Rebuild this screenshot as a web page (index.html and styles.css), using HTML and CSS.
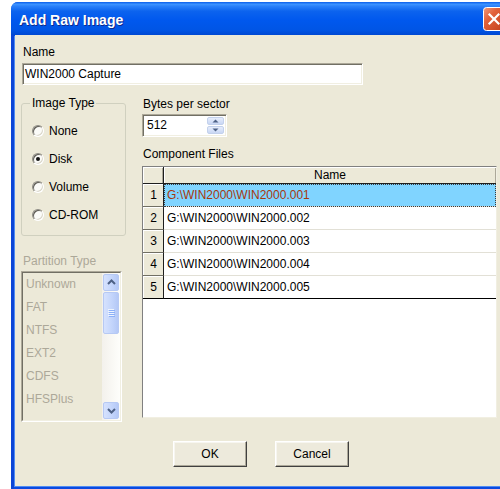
FILE: index.html
```html
<!DOCTYPE html>
<html>
<head>
<meta charset="utf-8">
<title>Add Raw Image</title>
<link rel="stylesheet" href="styles.css">
</head>
<body>
<div class="window">
  <div class="titlebar">
    <span class="title">Add Raw Image</span>
    <span class="close">
      <svg width="22" height="24" viewBox="0 0 22 24">
        <defs>
          <linearGradient id="cg" x1="0" y1="0" x2="1" y2="1">
            <stop offset="0" stop-color="#F09A7C"/>
            <stop offset="0.35" stop-color="#E2623B"/>
            <stop offset="1" stop-color="#C2401C"/>
          </linearGradient>
        </defs>
        <rect x="0.5" y="0.5" width="21" height="23" rx="3" fill="url(#cg)" stroke="#fff"/>
        <path d="M6.5 7.5 L15.5 16.5 M15.5 7.5 L6.5 16.5" stroke="#fff" stroke-width="2.2" stroke-linecap="square"/>
      </svg>
    </span>
  </div>
  <div class="frame">
    <div class="client">
      <div class="lbl">Name</div>
      <div class="edit">WIN2000 Capture</div>

      <div class="main">
        <div class="left">
          <fieldset class="group">
            <legend>Image Type</legend>
            <div class="radio"><span class="rb"></span>None</div>
            <div class="radio"><span class="rb on"></span>Disk</div>
            <div class="radio"><span class="rb"></span>Volume</div>
            <div class="radio"><span class="rb"></span>CD-ROM</div>
          </fieldset>

          <div class="lbl disabled part-lbl">Partition Type</div>
          <div class="listbox">
            <div class="listbox-in">
              <ul class="items">
                <li>Unknown</li>
                <li>FAT</li>
                <li>NTFS</li>
                <li>EXT2</li>
                <li>CDFS</li>
                <li>HFSPlus</li>
              </ul>
              <div class="vscroll">
                <span class="sbtn">
                  <svg width="15" height="15" viewBox="0 0 15 15"><path d="M4 9 L7.5 5.5 L11 9" fill="none" stroke="#4D6185" stroke-width="2"/></svg>
                </span>
                <span class="thumb">
                  <svg width="7" height="8" viewBox="0 0 7 8"><path d="M0 0.5h6M0 2.5h6M0 4.5h6M0 6.5h6" stroke="#EEF4FE" stroke-width="1"/><path d="M1 1.5h6M1 3.5h6M1 5.5h6M1 7.5h6" stroke="#8CB0F8" stroke-width="1"/></svg>
                </span>
                <span class="track"></span>
                <span class="sbtn">
                  <svg width="15" height="15" viewBox="0 0 15 15"><path d="M4 6 L7.5 9.5 L11 6" fill="none" stroke="#4D6185" stroke-width="2"/></svg>
                </span>
              </div>
            </div>
          </div>
        </div>

        <div class="right">
          <div class="lbl">Bytes per sector</div>
          <div class="spin">
            <span class="spin-val">512</span>
            <span class="spin-btns">
              <span class="spb"><svg width="7" height="4" viewBox="0 0 7 4"><path d="M0.5 3.5 L3.5 0.5 L6.5 3.5 Z" fill="#4D6185"/></svg></span>
              <span class="spb"><svg width="7" height="4" viewBox="0 0 7 4"><path d="M0.5 0.5 L3.5 3.5 L6.5 0.5 Z" fill="#4D6185"/></svg></span>
            </span>
          </div>

          <div class="lbl files-lbl">Component Files</div>
          <div class="grid">
            <div class="hcell corner"></div>
            <div class="hcell">Name</div>

            <div class="rh">1</div>
            <div class="cell sel">G:\WIN2000\WIN2000.001</div>
            <div class="rh">2</div>
            <div class="cell">G:\WIN2000\WIN2000.002</div>
            <div class="rh">3</div>
            <div class="cell">G:\WIN2000\WIN2000.003</div>
            <div class="rh">4</div>
            <div class="cell">G:\WIN2000\WIN2000.004</div>
            <div class="rh last">5</div>
            <div class="cell last">G:\WIN2000\WIN2000.005</div>
          </div>
        </div>
      </div>

      <div class="buttons">
        <button class="btn">OK</button>
        <button class="btn">Cancel</button>
      </div>
    </div>
  </div>
</div>
</body>
</html>
```

FILE: styles.css
```css
* { box-sizing: border-box; }

html, body { margin: 0; padding: 0; }

body {
  width: 500px;
  height: 489px;
  overflow: hidden;
  background: #fff;
  font-family: "Liberation Sans", Arial, sans-serif;
  font-size: 12px;
  color: #000;
}

/* window chrome */
.window {
  margin: 2px 0 0 11px;
  width: 500px;
  height: 487px;
  display: flex;
  flex-direction: column;
  background: #0A4AD8;
  border-radius: 7px 7px 0 0;
  overflow: hidden;
}

.titlebar {
  height: 33px;
  flex: none;
  display: flex;
  align-items: flex-start;
  padding-left: 8px;
  background: linear-gradient(#0A5EEB 0%, #3D93FF 7%, #2A80FA 13%, #0C63EE 28%, #0058EE 55%, #0055E5 85%, #0048D2 100%);
}

.title {
  margin-top: 10px;
  font-weight: bold;
  font-size: 14px;
  line-height: 16px;
  color: #fff;
  text-shadow: 1px 1px 0 #0D2A8E;
  white-space: nowrap;
}

.close {
  margin: 5px 6px 0 auto;
  width: 22px;
  height: 24px;
  display: block;
}
.close svg { display: block; }

.frame {
  flex: 1;
  display: flex;
  padding: 0 0 3px 4px;
  background: linear-gradient(to right, #0B45D6 0 3px, #0B4AE0 3px);
}

.client {
  flex: 1;
  background: #ECE9D8;
  box-shadow: -1px 1px 0 #4F8CF2;
  padding: 10px 0 0 6px;
  display: flex;
  flex-direction: column;
}

/* labels */
.lbl {
  line-height: 14px;
  padding-left: 2px;
  white-space: nowrap;
}
.disabled { color: #ACA899; }

/* sunken single-line edit */
.edit {
  margin: 4px 0 0 1px;
  width: 341px;
  height: 22px;
  background: #fff;
  border: 1px solid;
  border-color: #ACA899 #fff #fff #ACA899;
  box-shadow: inset 1px 1px 0 #716F64, inset -1px -1px 0 #F1EFE2;
  padding-left: 2px;
  line-height: 20px;
  white-space: nowrap;
}

.main {
  display: flex;
  gap: 16px;
  margin-top: 11px;
}

.left {
  width: 105px;
  flex: none;
  display: flex;
  flex-direction: column;
}

/* group box */
.group {
  margin: 0;
  min-width: 0;
  padding: 7px 0 6px 8px;
  border: 1px solid #D0D0BF;
  border-radius: 3px;
}
.group legend {
  padding: 0 2px;
  line-height: 14px;
}

.radio {
  height: 28px;
  display: flex;
  align-items: center;
  gap: 5px;
  margin-left: 2px;
}
.rb {
  width: 12px;
  height: 12px;
  flex: none;
  border-radius: 50%;
  border: 1px solid;
  border-color: #8E8C84 #fff #fff #8E8C84;
  background: #FBFBF8;
  box-shadow: inset 1px 1px 0 #5E5C55, inset -1px -1px 0 #DAD7CA;
  display: grid;
  place-items: center;
}
.rb.on::after {
  content: "";
  width: 4px;
  height: 4px;
  border-radius: 50%;
  background: #111;
}

.part-lbl { margin-top: 18px; }

/* disabled list box */
.listbox {
  margin-top: 3px;
  width: 101px;
  height: 151px;
  border: 1px solid;
  border-color: #ACA899 #fff #fff #ACA899;
}
.listbox-in {
  height: 100%;
  display: flex;
  border: 1px solid;
  border-color: #716F64 #F1EFE2 #F1EFE2 #716F64;
  background: #ECE9D8;
}
.items {
  flex: 1;
  margin: 0;
  padding: 0 0 0 3px;
  list-style: none;
  color: #ACA899;
}
.items li {
  line-height: 23px;
  height: 23px;
  white-space: nowrap;
}

.vscroll {
  width: 18px;
  flex: none;
  display: flex;
  flex-direction: column;
  padding: 1px 1px 1px 1px;
  background: linear-gradient(to right, #F3F1EC, #FEFEFB);
}
.sbtn, .thumb {
  display: grid;
  place-items: center;
  border: 1px solid #B6C9F4;
  border-radius: 2px;
  background: linear-gradient(to right, #D6E2FE, #C2D4FB 60%, #B4C8F6);
}
.sbtn { height: 17px; }
.thumb { height: 42px; margin-top: 1px; }
.track { flex: 1; }

.right {
  width: 355px;
  flex: none;
  padding-top: 1px;
  display: flex;
  flex-direction: column;
}
.right .lbl { padding-left: 1px; }

/* spin edit */
.spin {
  margin-top: 3px;
  width: 85px;
  height: 23px;
  display: flex;
  background: #fff;
  border: 1px solid;
  border-color: #ACA899 #fff #fff #ACA899;
  box-shadow: inset 1px 1px 0 #716F64, inset -1px -1px 0 #F1EFE2;
}
.spin-val {
  flex: 1;
  padding-left: 4px;
  line-height: 21px;
}
.spin-btns {
  width: 17px;
  margin: 2px 2px 0 0;
  display: flex;
  flex-direction: column;
  gap: 1px;
}
.spb {
  height: 8px;
  display: grid;
  place-items: center;
  border: 1px solid #C3D1EC;
  border-radius: 2px;
  background: linear-gradient(#E6EDFC, #C9D7F4);
}
.spb svg { display: block; }

.files-lbl { margin-top: 10px; }

/* component files grid */
.grid {
  margin-top: 5px;
  height: 252px;
  background: #fff;
  border: 1px solid;
  border-color: #808080 #F1EFE2 #F1EFE2 #808080;
  display: grid;
  grid-template-columns: 21px 1fr;
  grid-auto-rows: 23px;
  grid-template-rows: 17px;
  align-content: start;
}
.hcell {
  background: #ECE9D8;
  border-bottom: 1px solid #1E1E1E;
  box-shadow: inset 1px 1px 0 #fff, inset -1px 0 0 #ACA899;
  text-align: center;
  line-height: 16px;
}
.hcell.corner {
  border-right: 1px solid #1E1E1E;
}
.rh {
  background: #ECE9D8;
  border-right: 1px solid #1E1E1E;
  border-bottom: 1px solid #716F64;
  box-shadow: inset 1px 1px 0 #fff;
  text-align: center;
  line-height: 22px;
  padding-left: 1px;
}
.cell {
  border-bottom: 1px solid #E2E0D6;
  padding-left: 3px;
  line-height: 22px;
  white-space: nowrap;
}
.cell.sel {
  background: #80D4FF;
  color: #A8380C;
  outline: 1px dotted #3A3A3A;
  outline-offset: -1px;
}
.rh.last, .cell.last { border-bottom-color: #000; }

/* dialog buttons */
.buttons {
  display: flex;
  gap: 28px;
  margin-top: 19px;
  padding-left: 152px;
}
.btn {
  width: 74px;
  height: 26px;
  padding: 0;
  font-family: "Liberation Sans", Arial, sans-serif;
  font-size: 12px;
  color: #000;
  background: #EDEADC;
  border: 1px solid;
  border-color: #fff #404040 #404040 #fff;
  box-shadow: inset -1px -1px 0 #ACA899, inset 1px 1px 0 #F7F6F0;
}
```
